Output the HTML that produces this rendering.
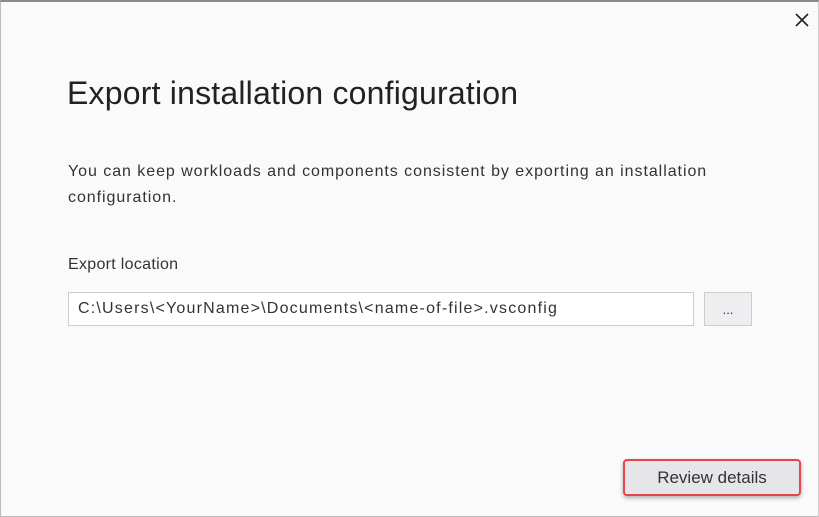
<!DOCTYPE html>
<html><head><style>
body{margin:0;width:819px;height:517px;background:#fff;overflow:hidden;font-family:"Liberation Sans",sans-serif;}
.win{position:absolute;left:0;top:0;width:817px;height:514px;background:#fafafa;border-top:2px solid #8a8a8a;border-left:1px solid #bbb;border-right:1px solid #ccc;border-bottom:1px solid #bbb;}
.x{position:absolute;left:794px;top:11px;}
h1{position:absolute;left:66px;top:73px;margin:0;font-weight:normal;font-size:32px;letter-spacing:0.2px;color:#222;}
.p{position:absolute;left:67px;top:157px;font-size:16px;line-height:26px;letter-spacing:0.95px;color:#333;width:720px;}
.l{position:absolute;left:67px;top:254px;font-size:16px;letter-spacing:0.3px;color:#333;}
.in{position:absolute;left:67px;top:290px;width:615px;height:32px;border:1px solid #ccc;background:#fff;font-size:16px;letter-spacing:1.2px;line-height:32px;padding-left:9px;color:#333;}
.b{position:absolute;left:703px;top:290px;width:46px;height:32px;border:1px solid #ccc;background:#eeeef0;font-size:13px;text-align:center;line-height:34px;color:#333;}
.r{position:absolute;left:622px;top:457px;width:174px;height:33px;border:2px solid #e8444b;border-radius:4px;background:#e6e6ea;font-size:17px;text-align:center;line-height:33px;color:#333;box-shadow:0 2px 4px rgba(0,0,0,.3);}
</style></head><body>
<div class="win">
<svg class="x" width="14" height="14" viewBox="0 0 14 14"><path d="M1 1L13 13M13 1L1 13" stroke="#222" stroke-width="1.6"/></svg>
<h1>Export installation configuration</h1>
<div class="p">You can keep workloads and components consistent by exporting an installation<br>configuration.</div>
<div class="l">Export location</div>
<div class="in">C:\Users\&lt;YourName&gt;\Documents\&lt;name-of-file&gt;.vsconfig</div>
<div class="b">...</div>
<div class="r">Review details</div>
</div>
</body></html>
